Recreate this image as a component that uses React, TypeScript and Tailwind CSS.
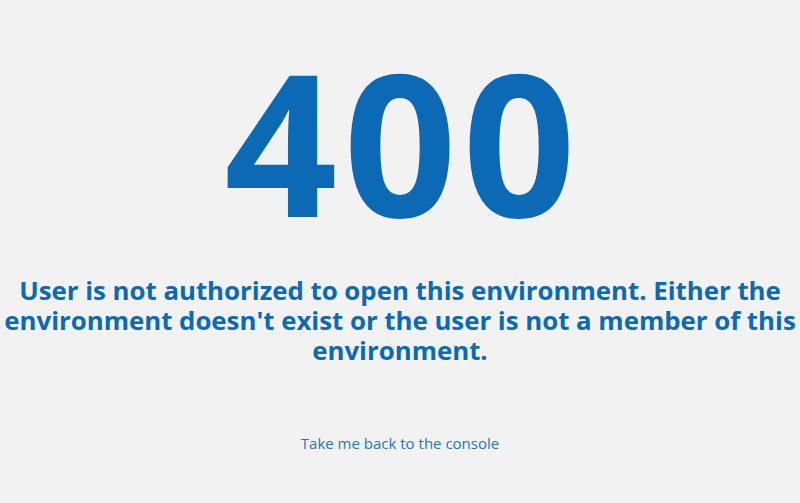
export default function App() {
  return (
    <div className="min-h-[503px] w-full bg-[#f2f2f2] flex flex-col items-center text-center" style={{ fontFamily: '"Open Sans", sans-serif' }}>
      <div className="mt-[30px] pl-[6px] text-[198px] leading-[220px] font-bold text-[#0b69b5] tracking-[6px]">400</div>
      <h1 className="mt-[25px] text-[25.8px] leading-[30px] font-bold text-[#0b69b5] whitespace-nowrap">
        <div>User is not authorized to open this environment. Either the</div>
        <div>environment doesn't exist or the user is not a member of this</div>
        <div>environment.</div>
      </h1>
      <a href="#" className="mt-[68px] text-[15px] leading-[20px] text-[#2577b8]">Take me back to the console</a>
    </div>
  );
}
